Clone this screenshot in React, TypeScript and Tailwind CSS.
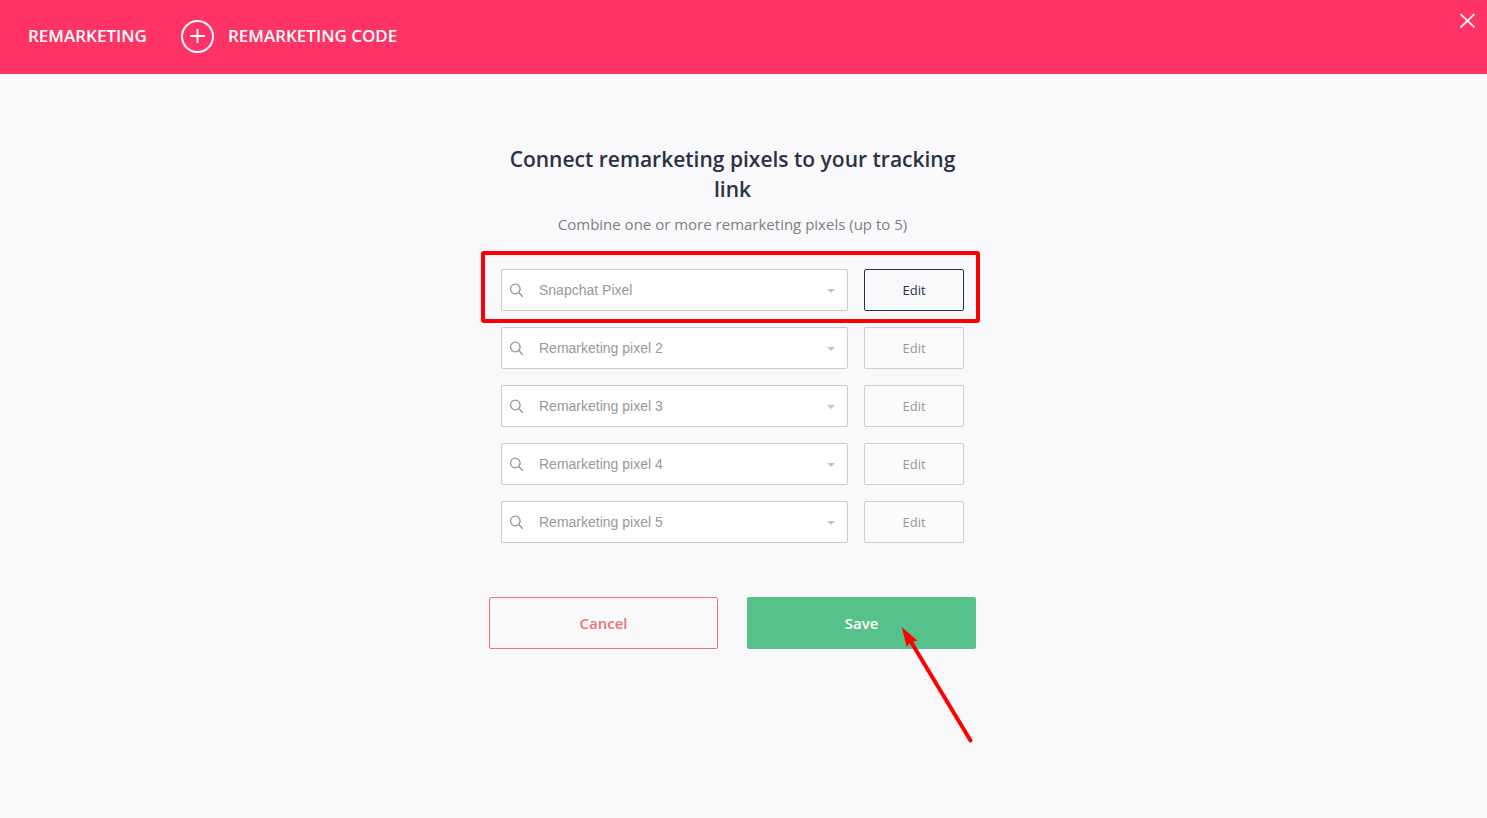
import React from 'react';

const pixels = ['Snapchat Pixel', 'Remarketing pixel 2', 'Remarketing pixel 3', 'Remarketing pixel 4', 'Remarketing pixel 5'];

function Header() {
  return (
    <header className="flex h-[74px] items-start justify-between bg-[#ff3366] pl-7 pr-3 text-white">
      <nav className="flex h-[72px] items-center text-[17px] font-semibold leading-6">
        <a href="#remarketing">REMARKETING</a>
        <a href="#code" className="ml-[34px] flex items-center gap-[14px]">
          <svg width="33" height="33" viewBox="0 0 33 33" fill="none" stroke="currentColor" strokeWidth="2" aria-hidden="true">
            <circle cx="16.5" cy="16.5" r="15.5" />
            <path d="M9 16h15M16.5 9v14" />
          </svg>
          REMARKETING CODE
        </a>
      </nav>
      <button type="button" aria-label="Close" className="mt-[13px]">
        <svg width="15" height="15" viewBox="0 0 15 15" fill="none" stroke="currentColor" strokeWidth="1.8" className="block">
          <path d="M.6 1.1l13.8 13.2M14.4 1.1L.6 14.3" />
        </svg>
      </button>
    </header>
  );
}

function PixelRow({ name, index }: { name: string; index: number }) {
  const active = index === 0;
  return (
    <div className="relative flex gap-4">
      {active && (
        <div className="pointer-events-none absolute -bottom-3 -left-5 -right-4 -top-[18px] rounded-[3px] border-4 border-[#ff0000]" />
      )}
      <div className="relative flex-1">
        <svg
          className="pointer-events-none absolute left-2 top-[14px] text-[#969696]"
          width="15"
          height="15"
          viewBox="0 0 15 15"
          fill="none"
          stroke="currentColor"
          strokeWidth="1.3"
          aria-hidden="true"
        >
          <circle cx="6.3" cy="6" r="4.8" />
          <path d="M9.8 9.5l4 4.2" />
        </svg>
        <select
          aria-label={`Pixel ${index + 1}`}
          className="block h-[42px] w-full appearance-none rounded-[2px] border border-[#cccccc] bg-white pl-[37px] pr-8 font-['Liberation_Sans',Arial,sans-serif] text-sm text-[#999999]"
        >
          <option>{name}</option>
        </select>
        <svg className="pointer-events-none absolute right-[13px] top-5" width="8" height="4" viewBox="0 0 8 4" fill="#c4c4c4" aria-hidden="true">
          <path d="M0 0h8L4 4z" />
        </svg>
      </div>
      <button
        type="button"
        disabled={!active}
        className={
          active
            ? 'w-[100px] rounded-[2px] border border-[#2c3143] text-[13px] leading-5 text-[#2c3143]'
            : 'w-[100px] rounded-[2px] border border-[#cfcfd1] bg-[#fbfbfc] text-[13px] leading-5 text-[#999999]'
        }
      >
        Edit
      </button>
    </div>
  );
}

export default function App() {
  return (
    <div className="min-h-screen bg-[#f9f9fc] font-['Open_Sans','Noto_Sans',sans-serif]">
      <Header />
      <main className="pr-[22px] pt-[70px]">
        <form className="mx-auto max-w-[487px]" onSubmit={(e) => e.preventDefault()}>
          <div className="px-3">
            <h1 className="text-center text-[21px] font-semibold leading-[30px] text-[#2c3143]">
              Connect remarketing pixels to your tracking link
            </h1>
            <p className="mt-2 text-center text-[15px] leading-6 text-[#808080]">
              Combine one or more remarketing pixels (up to 5)
            </p>
            <div className="mt-[33px] flex flex-col gap-4">
              {pixels.map((name, i) => (
                <PixelRow key={name} name={name} index={i} />
              ))}
            </div>
          </div>
          <div className="mt-[54px] grid grid-cols-2 gap-[29px] text-[15px] font-semibold">
            <button type="button" className="h-[52px] rounded-[2px] border border-[#ec7474] text-[#ec7474]">
              Cancel
            </button>
            <div className="relative">
              <button type="submit" className="h-[52px] w-full rounded-[2px] bg-[#56c18a] text-white">
                Save
              </button>
              <svg
                className="pointer-events-none absolute right-0 top-[28px]"
                width="76"
                height="120"
                viewBox="0 0 76 120"
                aria-hidden="true"
              >
                <path d="M10.5 16l60 99.5" stroke="#ff0000" strokeWidth="4" strokeLinecap="round" fill="none" />
                <path d="M1.7 2l15.5 13.5-4.5 1.3-3.5 2-2.5 3z" fill="#ff0000" />
              </svg>
            </div>
          </div>
        </form>
      </main>
    </div>
  );
}
